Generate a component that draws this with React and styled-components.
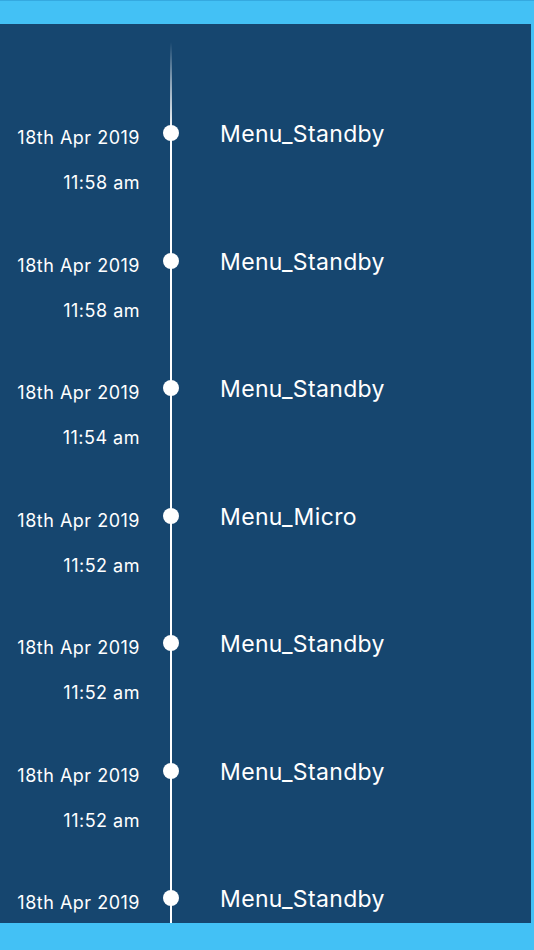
import React from 'react';
import styled, { createGlobalStyle } from 'styled-components';

const GlobalStyle = createGlobalStyle`
  html, body {
    margin: 0;
    padding: 0;
    background: #43c1f5;
  }
  body {
    font-family: Inter, "Noto Sans", sans-serif;
  }
`;

const Screen = styled.div`
  width: 534px;
  height: 950px;
  display: flex;
  flex-direction: column;
  background: #43c1f5;
  border-top: 1px solid #35a9e0;
  box-sizing: border-box;
  overflow: hidden;
`;

const TopBar = styled.div`
  height: 23px;
  flex-shrink: 0;
`;

const Panel = styled.div`
  width: 531px;
  height: 899px;
  flex-shrink: 0;
  background: #16466f;
  overflow: hidden;
  box-sizing: border-box;
  padding-top: 96px;
  position: relative;

  &::before {
    content: '';
    position: absolute;
    left: 170px;
    top: 18px;
    bottom: 0;
    width: 2px;
    background: linear-gradient(
      to bottom,
      rgba(255, 255, 255, 0) 0px,
      rgba(255, 255, 255, 0.5) 40px,
      #ffffff 90px
    );
  }
`;

const Row = styled.div`
  height: 127.5px;
  display: grid;
  grid-template-columns: 140px 62px 1fr;
  align-items: start;
  color: #ffffff;
`;

const Stamp = styled.div`
  display: flex;
  flex-direction: column;
  align-items: flex-end;
  padding-top: 7px;
`;

const DateText = styled.div`
  font-size: 18px;
  line-height: 21px;
  letter-spacing: 0.5px;
`;

const TimeText = styled.div`
  font-size: 18px;
  line-height: 21px;
  letter-spacing: 0.5px;
  margin-top: 24px;
`;

const DotCell = styled.div`
  display: flex;
  justify-content: center;
  padding-top: 5px;
  position: relative;
  z-index: 1;
`;

const Dot = styled.span`
  width: 16px;
  height: 16px;
  border-radius: 50%;
  background: #ffffff;
`;

const Title = styled.div`
  padding-left: 18px;
  font-size: 23px;
  line-height: 28px;
  letter-spacing: 0.35px;
`;

const events = [
  { date: '18th Apr 2019', time: '11:58 am', name: 'Menu_Standby' },
  { date: '18th Apr 2019', time: '11:58 am', name: 'Menu_Standby' },
  { date: '18th Apr 2019', time: '11:54 am', name: 'Menu_Standby' },
  { date: '18th Apr 2019', time: '11:52 am', name: 'Menu_Micro' },
  { date: '18th Apr 2019', time: '11:52 am', name: 'Menu_Standby' },
  { date: '18th Apr 2019', time: '11:52 am', name: 'Menu_Standby' },
  { date: '18th Apr 2019', time: null, name: 'Menu_Standby' },
];

const App = () => (
  <>
    <GlobalStyle />
    <Screen>
      <TopBar />
      <Panel>
        {events.map((e, i) => (
          <Row key={i}>
            <Stamp>
              <DateText>{e.date}</DateText>
              {e.time && <TimeText>{e.time}</TimeText>}
            </Stamp>
            <DotCell>
              <Dot />
            </DotCell>
            <Title>{e.name}</Title>
          </Row>
        ))}
      </Panel>
    </Screen>
  </>
);

export default App;
